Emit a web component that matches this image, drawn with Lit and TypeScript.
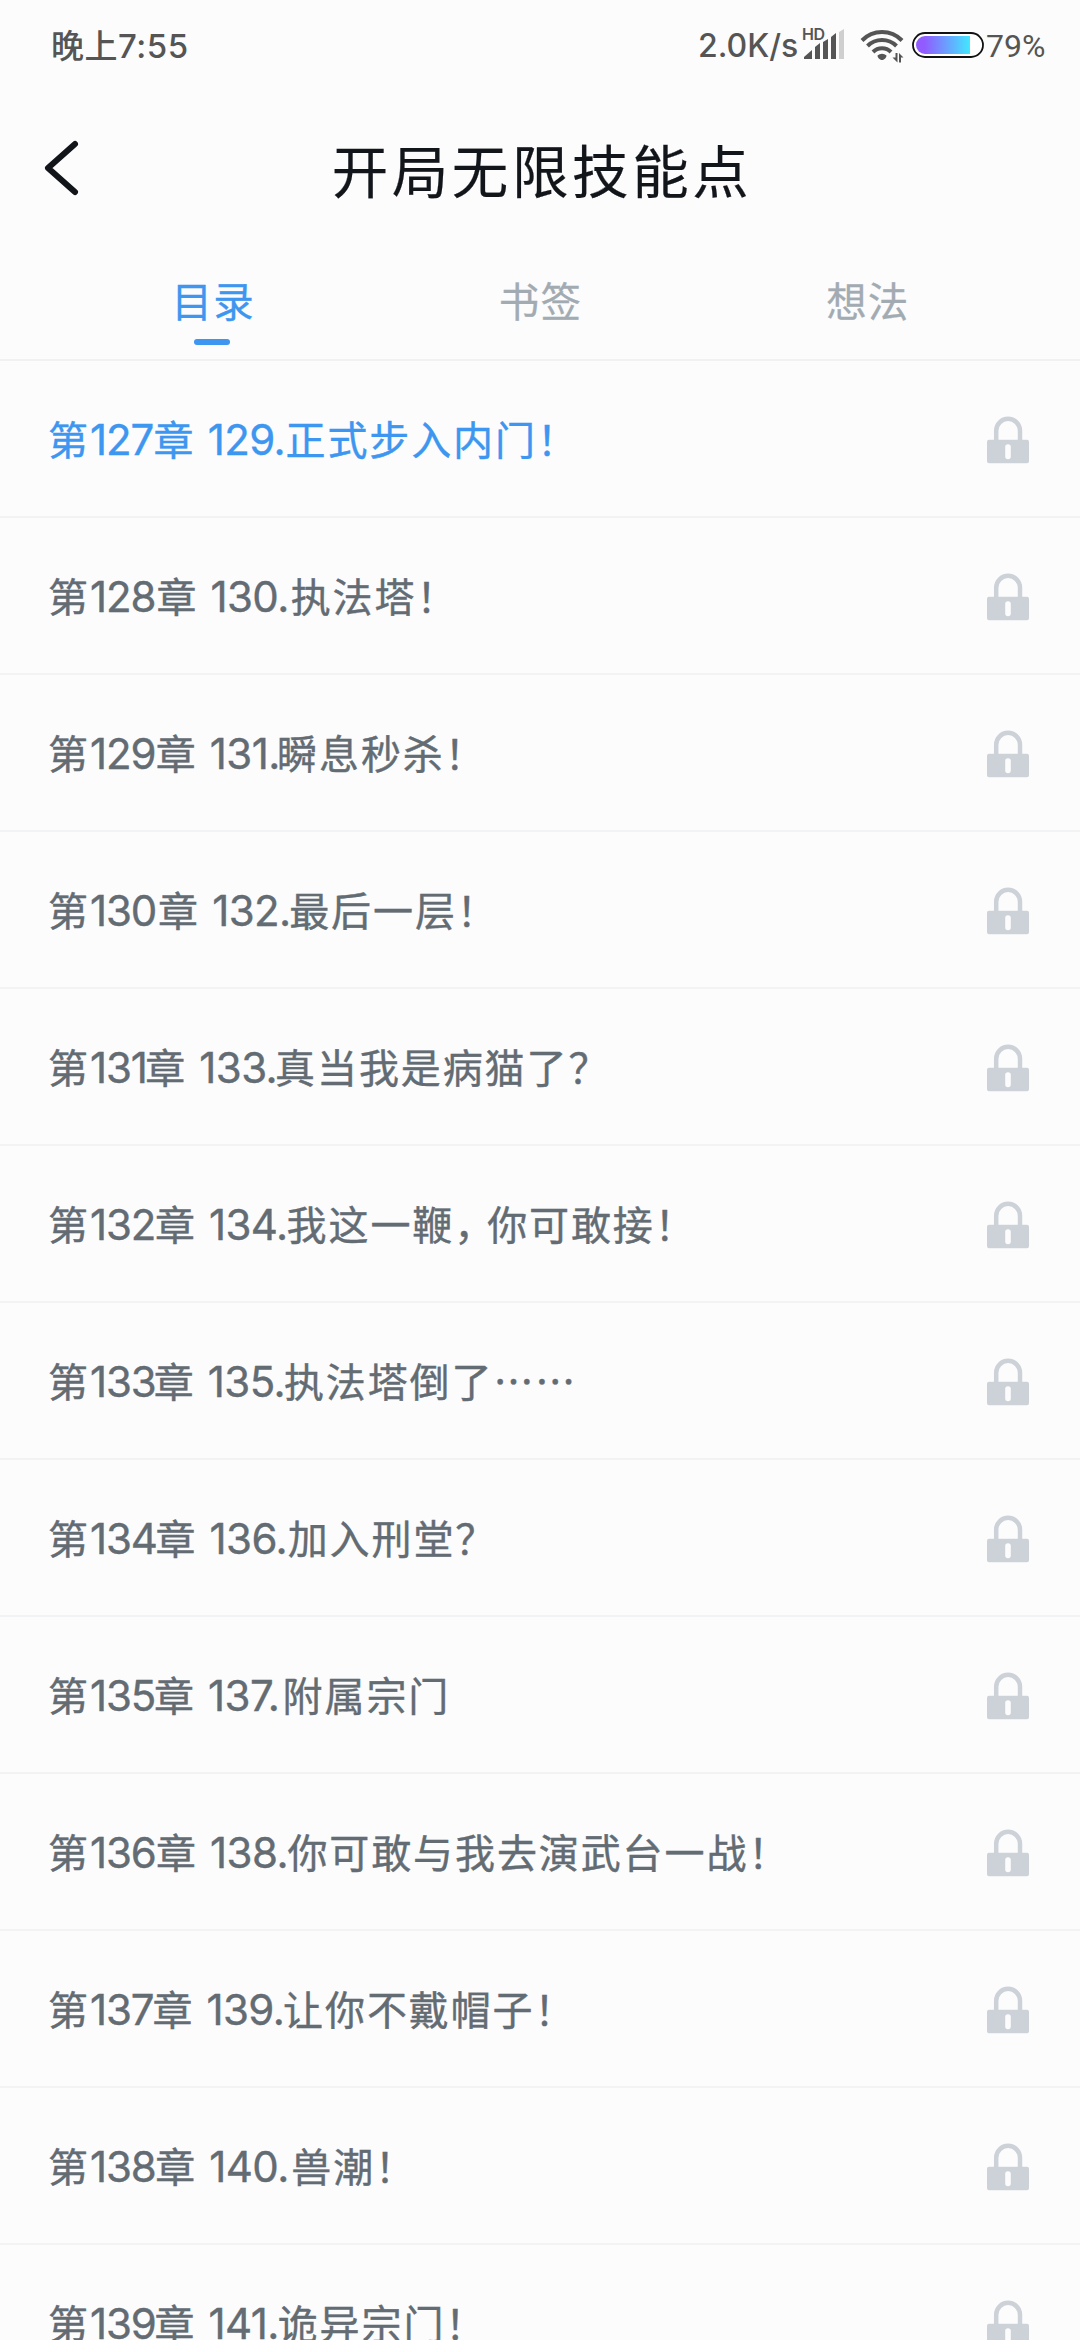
import { LitElement, html, css } from "lit";
import { customElement, property } from "lit/decorators.js";
import { styleMap } from "lit/directives/style-map.js";

interface Chapter {
  no: string;
  index: string;
  title: string;
}

const CHAPTERS: Chapter[] = [
  { no: "127", index: "129.", title: "正式步入内门！" },
  { no: "128", index: "130.", title: "执法塔！" },
  { no: "129", index: "131.", title: "瞬息秒杀！" },
  { no: "130", index: "132.", title: "最后一层！" },
  { no: "131", index: "133.", title: "真当我是病猫了？" },
  { no: "132", index: "134.", title: "我这一鞭，你可敢接！" },
  { no: "133", index: "135.", title: "执法塔倒了……" },
  { no: "134", index: "136.", title: "加入刑堂？" },
  { no: "135", index: "137.", title: "附属宗门" },
  { no: "136", index: "138.", title: "你可敢与我去演武台一战！" },
  { no: "137", index: "139.", title: "让你不戴帽子！" },
  { no: "138", index: "140.", title: "兽潮！" },
  { no: "139", index: "141.", title: "诡异宗门！" },
];

/** Advance of each numeral at the list's text size, in pixels. */
const ADVANCE: Record<string, number> = {
  "0": 28.5, "1": 15.6, "2": 25.3, "3": 24.1, "4": 25.9,
  "5": 24.4, "6": 26.4, "7": 22.8, "8": 25.6, "9": 24.9,
  " ": 11.9, ".": 12.3,
};

const advance = (text: string) => {
  const width = [...text].reduce((sum, ch) => sum + (ADVANCE[ch] ?? 0), 0);
  return { width: `${width.toFixed(1)}px` };
};

@customElement("status-bar")
export class StatusBar extends LitElement {
  static styles = css`
    :host {
      display: flex;
      justify-content: space-between;
      height: 90px;
      box-sizing: border-box;
      padding: 0 36px 0 51px;
      color: #555;
      font-family: Inter, "Noto Sans CJK SC", sans-serif;
      font-weight: 500;
      line-height: 92px;
      white-space: nowrap;
    }
    .time { font-size: 33px; letter-spacing: 0.500px; }
    .right { display: flex; align-items: flex-start; }
    .speed { font-size: 32px; width: 106px; margin-left: -1px; }
    .signal { width: 42px; margin: 27px 14px 0 0; }
    .wifi { width: 44px; margin: 28px 8px 0 0; }
    .battery { width: 72px; margin: 31px 2px 0 0; }
    .percent { font-family: Roboto, sans-serif; font-size: 32px; font-weight: 400; width: 58px; }
    svg { display: block; flex: none; overflow: visible; }
    .hd { font: 600 16px/1 Inter, sans-serif; fill: #555; }
  `;

  render() {
    return html`
      <div class="time">晚上7:55</div>
      <div class="right">
        <span class="speed">2.0K/s</span>
        <svg class="signal" width="42" height="34" viewBox="0 0 42 34">
          <text class="hd" x="-2" y="13" textLength="23">HD</text>
          <path d="M0 32v-2l8-7v9zM11 32V20l5-4v16zM19 32V15l5-3v20zM27 32V10l5-4v26z" fill="#555" />
          <path d="M35 32V5l5-3v30z" fill="#cfcfcf" />
        </svg>
        <svg class="wifi" width="44" height="36" viewBox="0 0 44 36">
          <g fill="none" stroke="#555" stroke-width="4">
            <path d="M2 12.500a28 28 0 0 1 40 0" />
            <path d="M7.500 18a20.500 20.500 0 0 1 29 0" />
            <path d="M13 24a12.700 12.700 0 0 1 18 0" />
          </g>
          <path d="M17.500 27.500a6.500 6.500 0 0 1 9 0c0 2-2 4.500-4.500 4.500s-4.500-2.500-4.500-4.500z" fill="#555" />
          <path d="M35.500 25h2v9.500l-5-5h3zM39 34.500h2v-5h2.500L39 25z" fill="#555" />
        </svg>
        <svg class="battery" width="72" height="28" viewBox="0 0 72 28">
          <defs>
            <linearGradient id="charge">
              <stop offset="0.150" stop-color="#915bff" />
              <stop offset="1" stop-color="#42e8ff" />
            </linearGradient>
          </defs>
          <rect x="1" y="2" width="70" height="24" rx="12" fill="#fff" stroke="#111" stroke-width="1.800" />
          <path d="M13 5H58v18H13a9 9 0 0 1 0-18z" fill="url(#charge)" />
        </svg>
        <span class="percent">79%</span>
      </div>
    `;
  }
}

@customElement("chapter-row")
export class ChapterRow extends LitElement {
  @property({ attribute: false }) chapter!: Chapter;
  @property({ type: Boolean, reflect: true }) current = false;

  static styles = css`
    :host {
      display: flex;
      align-items: center;
      justify-content: space-between;
      height: 157px;
      box-sizing: border-box;
      padding: 0 50px 0 48px;
      border-bottom: 2px solid #f2f3f4;
      color: #636b73;
    }
    :host([current]) { color: #3d96ef; }
    .text {
      display: flex;
      align-items: baseline;
      font-family: "Noto Sans CJK SC", sans-serif;
      font-size: 40px;
      letter-spacing: 1.900px;
      line-height: 60px;
      white-space: pre;
      -webkit-text-stroke: 0.400px currentColor;
    }
    .num {
      flex: none;
      font-family: Inter, sans-serif;
      font-size: 42px;
      letter-spacing: -1.100px;
    }
    .index { text-indent: 1px; letter-spacing: -0.600px; }
    .comma { font-feature-settings: "halt"; margin-right: 11px; }
    svg { display: block; flex: none; }
  `;

  private renderTitle(title: string) {
    return title
      .split(/(，)/)
      .map((part) => (part === "，" ? html`<span class="comma">，</span>` : html`<span>${part}</span>`));
  }

  render() {
    const { no, index, title } = this.chapter;
    const label = ` ${index}`;
    return html`
      <div class="text"><span>第</span><span class="num" style=${styleMap(advance(no))}>${no}</span><span>章</span><span class="num index" style=${styleMap(advance(label))}>${label}</span>${this.renderTitle(title)}</div>
      <svg width="44" height="50" viewBox="0 0 44 50">
        <path d="M10.200 27V16.700a11.900 11.900 0 0 1 23.800 0V27" fill="none" stroke="#cdd2d9" stroke-width="4.500" />
        <path
          fill-rule="evenodd"
          fill="#cdd2d9"
          d="M3 25.800h38a2 2 0 0 1 2 2v19.400a2 2 0 0 1-2 2H3a2 2 0 0 1-2-2V27.800a2 2 0 0 1 2-2zM22 30.300a2.800 2.800 0 0 0-2.800 2.800v9.400a2.800 2.800 0 0 0 5.600 0v-9.400a2.800 2.800 0 0 0-2.800-2.800z"
        />
      </svg>
    `;
  }
}

@customElement("app-root")
export class AppRoot extends LitElement {
  static styles = css`
    :host {
      display: flex;
      flex-direction: column;
      width: 1080px;
      height: 2340px;
      overflow: hidden;
      background: #fcfcfd;
      font-family: "Noto Sans CJK SC", sans-serif;
    }
    .header {
      display: grid;
      grid-template-columns: 120px 1fr 120px;
      align-items: center;
      height: 160px;
      flex: none;
    }
    .back { display: block; margin: -5px 0 0 40px; }
    h1 {
      margin: -5px 0 0;
      text-align: center;
      text-indent: 4px;
      font-size: 56.500px;
      font-weight: 400;
      letter-spacing: 3.600px;
      line-height: 84px;
      color: #12161b;
      -webkit-text-stroke: 0.200px currentColor;
    }
    .tabs {
      display: grid;
      grid-template-columns: repeat(3, 1fr);
      height: 111px;
      flex: none;
      box-sizing: border-box;
      padding: 0 49px;
      border-bottom: 2px solid #f0f1f2;
    }
    .tab {
      display: flex;
      flex-direction: column;
      align-items: center;
      padding-top: 20px;
      font-size: 40.500px;
      letter-spacing: 1.200px;
      text-indent: 1px;
      line-height: 60px;
      color: #a3abb2;
      -webkit-text-stroke: 0.300px currentColor;
    }
    .tab.active { color: #3d96ef; }
    .tab.active::after {
      content: "";
      width: 36px;
      height: 6px;
      margin: 9px 1px 0 0;
      border-radius: 3px;
      background: #3d96ef;
    }
    chapter-row { flex: none; }
  `;

  render() {
    return html`
      <status-bar></status-bar>
      <div class="header">
        <svg class="back" width="44" height="60" viewBox="0 0 44 60">
          <path d="M35 6L8 30L35 54" fill="none" stroke="#12161b" stroke-width="6" stroke-linecap="round" stroke-linejoin="round" />
        </svg>
        <h1>开局无限技能点</h1>
      </div>
      <div class="tabs">
        <div class="tab active">目录</div>
        <div class="tab">书签</div>
        <div class="tab">想法</div>
      </div>
      ${CHAPTERS.map((c, i) => html`<chapter-row .chapter=${c} ?current=${i === 0}></chapter-row>`)}
    `;
  }
}
